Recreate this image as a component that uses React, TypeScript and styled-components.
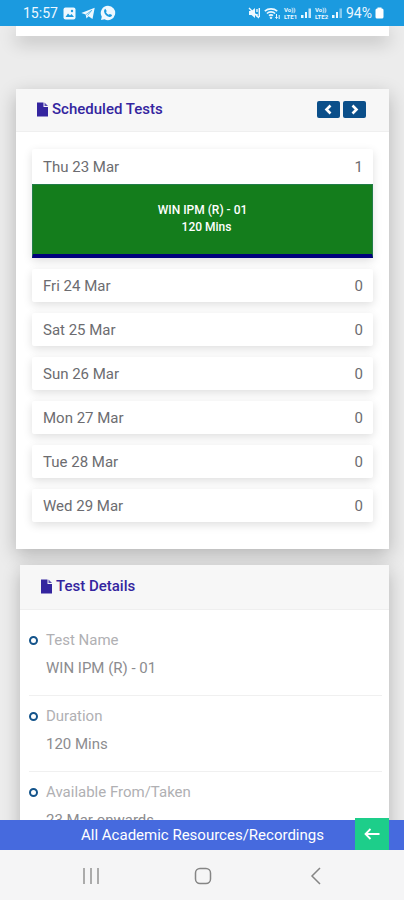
import React from "react";
import styled, { createGlobalStyle } from "styled-components";

const GlobalStyle = createGlobalStyle`
  *, *::before, *::after { box-sizing: border-box; }
  body { margin: 0; background: #ececec; font-family: Roboto, "Liberation Sans", sans-serif; }
  h2, p, ul, dl, dd { margin: 0; padding: 0; }
  button { border: 0; padding: 0; font: inherit; cursor: pointer; }
`;

const Screen = styled.div`
  display: flex;
  flex-direction: column;
  height: 100vh;
  overflow: hidden;
`;

const StatusBar = styled.header`
  display: flex;
  flex: none;
  align-items: center;
  justify-content: space-between;
  height: 26px;
  padding: 0 20px 0 23px;
  background: #1b9adf;
  color: #eef8ff;
  font-size: 14px;
  line-height: 26px;
`;

const StatusGroup = styled.div<{ $gap: number }>`
  display: flex;
  align-items: center;
  gap: ${(p) => p.$gap}px;
`;

const Content = styled.main`
  display: flex;
  flex: 1;
  flex-direction: column;
  min-height: 0;
  overflow: hidden;
  padding: 0 15px 0 16px;
`;

const Card = styled.section`
  flex: none;
  background: #fff;
  box-shadow: 0 6px 18px rgba(0, 0, 0, 0.24);
`;

const PreviousCard = styled(Card)`
  height: 10px;
  margin-bottom: 53px;
`;

const DetailsCard = styled(Card)`
  margin: 16px 0 0 4px;
  border-radius: 3px 3px 0 0;
`;

const CardHeader = styled.div<{ $height: number }>`
  display: flex;
  align-items: center;
  justify-content: space-between;
  height: ${(p) => p.$height}px;
  padding: 0 23px 2px 21px;
  border-bottom: 1px solid #efefef;
  background: #f7f7f7;
`;

const CardTitle = styled.h2`
  display: flex;
  align-items: center;
  gap: 4px;
  color: #34259f;
  font-size: 15px;
  font-weight: 500;
  line-height: 20px;
`;

const Pager = styled.div`
  display: flex;
  gap: 3px;
`;

const PagerButton = styled.button`
  display: flex;
  align-items: center;
  justify-content: center;
  width: 23px;
  height: 17px;
  border-radius: 2px;
  background: #0b4f8a;
`;

const DayList = styled.ul`
  display: flex;
  flex-direction: column;
  gap: 11px;
  padding: 17px 16px 27px;
  list-style: none;
`;

const Day = styled.li`
  border-radius: 2px;
  background: #fff;
  box-shadow: 0 3px 10px rgba(0, 0, 0, 0.13);
`;

const DayHeader = styled.div<{ $open: boolean }>`
  display: flex;
  align-items: center;
  justify-content: space-between;
  height: ${(p) => (p.$open ? 35 : 33)}px;
  padding: 0 10px 0 11px;
  color: #6c6c70;
  font-size: 15px;
`;

const TestButton = styled.button`
  display: block;
  width: 100%;
  height: 74px;
  padding-bottom: 2px;
  border: 1px solid #217d48;
  border-bottom: 4px solid #00007c;
  background: #147d1c;
  color: #fff;
  font-size: 12px;
  font-weight: 500;
  line-height: 17px;
  text-align: center;
`;

const TestName = styled.span`
  display: block;
`;

const TestLength = styled.span`
  display: block;
  padding-left: 8px;
`;

const Details = styled.dl`
  padding: 10px 7px 0 9px;
`;

const Detail = styled.div`
  display: grid;
  grid-template-columns: 9px 1fr;
  column-gap: 8px;
  align-items: center;
  height: 76px;
  padding: 6px 0 13px;
  border-bottom: 1px solid #f0f0f0;
  font-size: 15px;
  line-height: 28px;
`;

const Bullet = styled.span`
  width: 9px;
  height: 9px;
  border: 2px solid #14548b;
  border-radius: 50%;
`;

const Label = styled.dt`
  color: #b0b0b3;
`;

const Value = styled.dd`
  grid-column: 2;
  color: #8c8c8f;
`;

const ResourceBar = styled.div`
  display: flex;
  flex: none;
  align-items: flex-end;
  height: 30px;
  padding-right: 15px;
  background: #466ade;
`;

const ResourceLink = styled.a`
  flex: 1;
  padding-left: 50px;
  color: #fff;
  font-size: 15px;
  line-height: 30px;
  text-align: center;
  text-decoration: none;
`;

const BackButton = styled.button`
  display: flex;
  flex: none;
  align-items: center;
  justify-content: center;
  width: 34px;
  height: 32px;
  background: #1dce8a;
`;

const SystemNav = styled.nav`
  display: grid;
  flex: none;
  grid-template-columns: repeat(3, 28%);
  justify-content: center;
  height: 50px;
  padding: 2px 0 0 3px;
  background: #f5f5f6;
`;

const NavButton = styled.button`
  display: flex;
  align-items: center;
  justify-content: center;
  background: transparent;
`;

const FileIcon = () => (
  <svg width="11" height="15" viewBox="0 0 11 15" aria-hidden="true">
    <path d="M0 .5h6.500V5H11v9.500H0z" fill="#34259f" />
    <path d="M7.500.5 11 4H7.500z" fill="#5b4fb3" />
  </svg>
);

const Chevron = ({ next = false }: { next?: boolean }) => (
  <svg width="9" height="11" viewBox="0 0 9 11" fill="none" stroke="#fff" strokeWidth="2.600" aria-hidden="true">
    <path d={next ? "M2.500 1.500 6.500 5.500 2.500 9.500" : "M6.500 1.500 2.500 5.500 6.500 9.500"} />
  </svg>
);

const PictureIcon = () => (
  <svg width="13" height="13" viewBox="0 0 13 13" aria-hidden="true">
    <rect x=".5" y=".5" width="12" height="12" rx="2" fill="#eef8ff" />
    <path d="M2.500 10 5 6.500l2 2 1.500-1.500 2.500 3z" fill="#1b9adf" />
    <circle cx="9" cy="4" r="1.200" fill="#1b9adf" />
  </svg>
);

const TelegramIcon = () => (
  <svg width="14" height="13" viewBox="0 0 14 13" aria-hidden="true">
    <path d="M.3 6 13.700.8 11.500 12 7.500 9.200 5.500 11.500 4.600 7.600z" fill="#eef8ff" />
    <path d="m4.800 7.700 6-4.400-4.300 5.300" fill="none" stroke="#1b9adf" strokeWidth=".6" />
  </svg>
);

const WhatsAppIcon = () => (
  <svg width="16" height="16" viewBox="0 0 16 16" aria-hidden="true">
    <path d="M8 .8a7.200 7.200 0 1 1-3.500 13.500L1 15l.8-3.300A7.200 7.200 0 0 1 8 .8z" fill="#eef8ff" />
    <path d="M5.300 3.800 6.700 5.900 6 7.200c.6 1.200 1.500 2 2.700 2.600l1.200-.9 2.200 1.200c-.3 1.500-1.500 2-2.700 1.800C6.500 11.300 4.500 9 4.100 6.700c-.1-1.200.3-2.200 1.200-2.900z" fill="#1b9adf" />
  </svg>
);

const MuteIcon = () => (
  <svg width="13" height="12" viewBox="0 0 13 12" aria-hidden="true">
    <path d="M1 4h2.500L7 1v10L3.500 8H1z" fill="#eef8ff" />
    <path d="M1 1l10 10M9 2v3M11.300 1v9M9 7v3" stroke="#eef8ff" strokeWidth="1.400" />
  </svg>
);

const WifiIcon = () => (
  <svg width="17" height="13" viewBox="0 0 17 13" fill="none" stroke="#eef8ff" aria-hidden="true">
    <path d="M.8 4.200a9.500 9.500 0 0 1 12.400 0M2.900 6.500a6 6 0 0 1 8.200 0M5 8.700a3 3 0 0 1 4 0" strokeWidth="1.600" />
    <circle cx="7" cy="10.800" r=".8" fill="#eef8ff" />
    <path d="M12.500 7v4.500M11.300 10.300l1.200 1.200 1.200-1.200M15.200 12V8" />
  </svg>
);

const NetworkLabel = styled.span`
  display: flex;
  flex-direction: column;
  width: 14px;
  font-size: 6px;
  font-weight: 700;
  line-height: 7px;
`;

const SignalIcon = ({ faded = false }: { faded?: boolean }) => (
  <svg width="11" height="12" viewBox="0 0 11 12" fill="#eef8ff" aria-hidden="true">
    <path d="M0 8h2.500v3H0zM4 5h2v6H4z" />
    <path d="M7.500 1.500H10V11H7.500z" opacity={faded ? 0.5 : 0.8} />
  </svg>
);

const BatteryIcon = () => (
  <svg width="9" height="12" viewBox="0 0 9 12" fill="#fff" aria-hidden="true">
    <rect x=".5" y="1.500" width="8" height="10" rx="1.500" />
    <rect x="2.500" y=".5" width="4" height="2" />
  </svg>
);

const days = [
  { date: "Thu 23 Mar", tests: [{ name: "WIN IPM (R) - 01", length: "120 Mins" }] },
  { date: "Fri 24 Mar", tests: [] },
  { date: "Sat 25 Mar", tests: [] },
  { date: "Sun 26 Mar", tests: [] },
  { date: "Mon 27 Mar", tests: [] },
  { date: "Tue 28 Mar", tests: [] },
  { date: "Wed 29 Mar", tests: [] },
];

const details = [
  { label: "Test Name", value: "WIN IPM (R) - 01" },
  { label: "Duration", value: "120 Mins" },
  { label: "Available From/Taken", value: "23 Mar onwards" },
];

export default function App() {
  return (
    <Screen>
      <GlobalStyle />
      <StatusBar>
        <StatusGroup $gap={5}>
          <span>15:57</span>
          <PictureIcon />
          <TelegramIcon />
          <WhatsAppIcon />
        </StatusGroup>
        <StatusGroup $gap={3}>
          <MuteIcon />
          <WifiIcon />
          <NetworkLabel><span>Vo))</span><span>LTE1</span></NetworkLabel>
          <SignalIcon />
          <NetworkLabel><span>Vo))</span><span>LTE2</span></NetworkLabel>
          <SignalIcon faded />
          <span>94%</span>
          <BatteryIcon />
        </StatusGroup>
      </StatusBar>
      <Content>
        <PreviousCard />
        <Card>
          <CardHeader $height={43}>
            <CardTitle><FileIcon />Scheduled Tests</CardTitle>
            <Pager>
              <PagerButton aria-label="Previous week"><Chevron /></PagerButton>
              <PagerButton aria-label="Next week"><Chevron next /></PagerButton>
            </Pager>
          </CardHeader>
          <DayList>
            {days.map((day) => (
              <Day key={day.date}>
                <DayHeader $open={day.tests.length > 0}>
                  <span>{day.date}</span>
                  <span>{day.tests.length}</span>
                </DayHeader>
                {day.tests.map((test) => (
                  <TestButton key={test.name}>
                    <TestName>{test.name}</TestName>
                    <TestLength>{test.length}</TestLength>
                  </TestButton>
                ))}
              </Day>
            ))}
          </DayList>
        </Card>
        <DetailsCard>
          <CardHeader $height={45}>
            <CardTitle><FileIcon />Test Details</CardTitle>
          </CardHeader>
          <Details>
            {details.map((item) => (
              <Detail key={item.label}>
                <Bullet />
                <Label>{item.label}</Label>
                <Value>{item.value}</Value>
              </Detail>
            ))}
          </Details>
        </DetailsCard>
      </Content>
      <ResourceBar>
        <ResourceLink href="#resources">All Academic Resources/Recordings</ResourceLink>
        <BackButton aria-label="Back">
          <svg width="16" height="12" viewBox="0 0 16 12" fill="none" stroke="#fff" strokeWidth="1.800" aria-hidden="true">
            <path d="M15.500 6H1.500M6.500 1 1.500 6l5 5" />
          </svg>
        </BackButton>
      </ResourceBar>
      <SystemNav>
        <NavButton aria-label="Recent apps">
          <svg width="18" height="18" viewBox="0 0 18 18" stroke="#929292" strokeWidth="1.500" aria-hidden="true">
            <path d="M2 1v16M9 1v16M16 1v16" />
          </svg>
        </NavButton>
        <NavButton aria-label="Home">
          <svg width="18" height="18" viewBox="0 0 18 18" fill="none" stroke="#858585" strokeWidth="1.500" aria-hidden="true">
            <rect x="1.500" y="1.500" width="15" height="15" rx="4.500" />
          </svg>
        </NavButton>
        <NavButton aria-label="Go back">
          <svg width="18" height="18" viewBox="0 0 18 18" fill="none" stroke="#858585" strokeWidth="1.500" aria-hidden="true">
            <path d="M13 1 5 9l8 8" />
          </svg>
        </NavButton>
      </SystemNav>
    </Screen>
  );
}
